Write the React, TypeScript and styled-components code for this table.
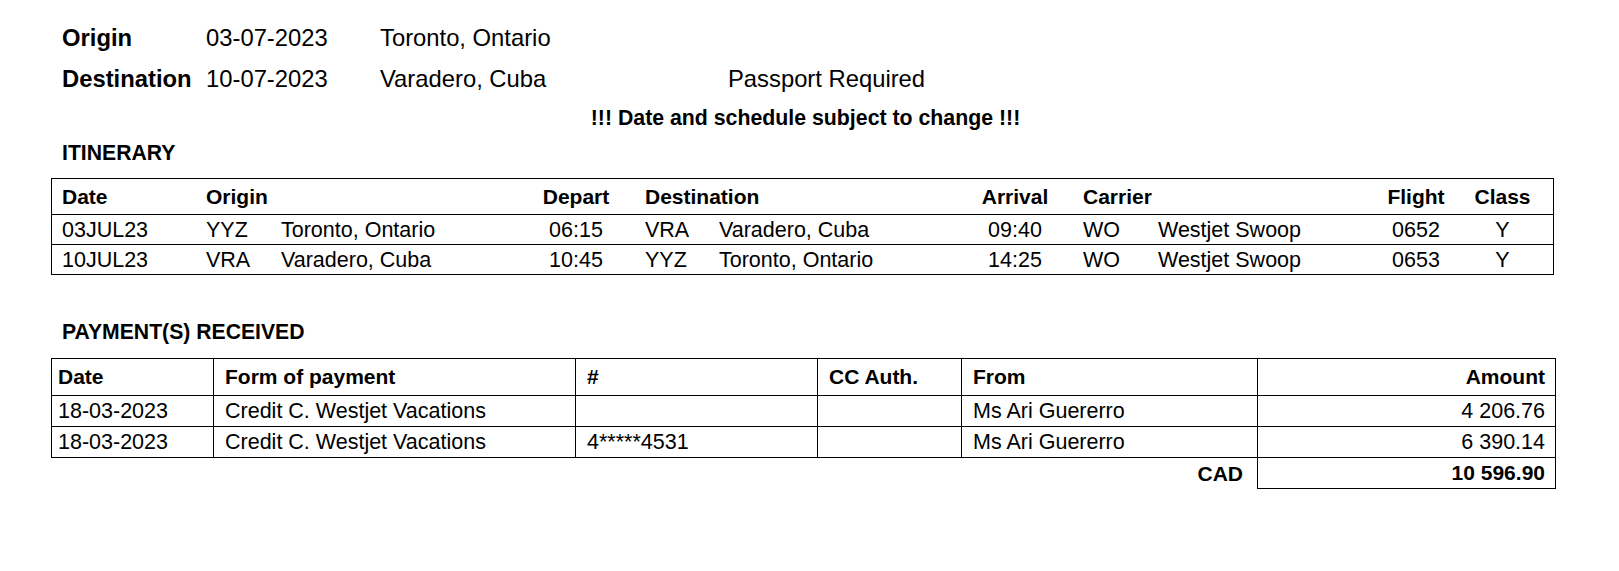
import React from 'react';
import styled, { createGlobalStyle } from 'styled-components';

const GlobalStyle = createGlobalStyle`
  html, body {
    margin: 0;
    padding: 0;
    background: #ffffff;
  }
  body {
    font-family: "Liberation Sans", Arial, sans-serif;
    color: #000000;
  }
`;

const Page = styled.div`
  width: 1619px;
  box-sizing: border-box;
  padding: 17px 0 40px 51px;
`;

const SummaryRow = styled.div`
  display: grid;
  grid-template-columns: 144px 174px 348px auto;
  padding-left: 11px;
  font-size: 23.8px;
  line-height: 41px;
`;

const SummaryLabel = styled.span`
  font-weight: bold;
`;

const SummaryValue = styled.span``;

const Notice = styled.div`
  width: 1503px;
  box-sizing: border-box;
  margin-top: 4px;
  padding-left: 6px;
  text-align: center;
  font-size: 21.3px;
  font-weight: bold;
  line-height: 30px;
`;

const SectionTitle = styled.div<{ $gap: number }>`
  margin-top: ${p => p.$gap}px;
  padding-left: 11px;
  font-size: 21.2px;
  font-weight: bold;
  line-height: 30px;
`;

const ItinTable = styled.div`
  width: 1503px;
  box-sizing: border-box;
  margin-top: 10px;
  border: 1px solid #000;
`;

const ItinRow = styled.div<{ $head?: boolean }>`
  display: grid;
  grid-template-columns: 144px 75px 226px 138px 74px 228px 136px 75px 222px 72px 101px;
  align-items: center;
  padding-left: 10px;
  padding-top: ${p => (p.$head ? 0 : 1)}px;
  box-sizing: border-box;
  height: ${p => (p.$head ? 35 : 30)}px;
  font-size: ${p => (p.$head ? 21 : 21.5)}px;
  font-weight: ${p => (p.$head ? 'bold' : 'normal')};
  & + & {
    border-top: 1px solid #000;
  }
`;

const ItinCell = styled.div<{ $center?: boolean; $span?: number }>`
  grid-column: span ${p => p.$span ?? 1};
  text-align: ${p => (p.$center ? 'center' : 'left')};
  white-space: nowrap;
`;

const PayTable = styled.div`
  display: grid;
  grid-template-columns: 163px 362px 242px 144px 296px 298px;
  margin-top: 11px;
  width: 1505px;
`;

const PayCell = styled.div<{
  $head?: boolean;
  $first?: boolean;
  $right?: boolean;
  $bold?: boolean;
}>`
  box-sizing: border-box;
  display: flex;
  align-items: center;
  justify-content: ${p => (p.$right ? 'flex-end' : 'flex-start')};
  height: ${p => (p.$head ? 38 : 31)}px;
  padding: ${p => (p.$right ? '0 10px 0 0' : p.$first ? '0 0 0 6px' : '0 0 0 11px')};
  border-right: 1px solid #000;
  border-bottom: 1px solid #000;
  border-top: ${p => (p.$head ? '1px solid #000' : 'none')};
  border-left: ${p => (p.$first ? '1px solid #000' : 'none')};
  font-size: ${p => (p.$head || p.$bold ? 21 : 21.5)}px;
  font-weight: ${p => (p.$head || p.$bold ? 'bold' : 'normal')};
  white-space: nowrap;
`;

const TotalLabel = styled.div`
  grid-column: span 5;
  box-sizing: border-box;
  height: 31px;
  display: flex;
  align-items: center;
  justify-content: flex-end;
  padding-right: 14px;
  border-right: 1px solid #000;
  font-size: 21px;
  font-weight: bold;
`;

const itinerary = [
  {
    date: '03JUL23',
    fromCode: 'YYZ',
    fromCity: 'Toronto, Ontario',
    depart: '06:15',
    toCode: 'VRA',
    toCity: 'Varadero, Cuba',
    arrival: '09:40',
    carrierCode: 'WO',
    carrier: 'Westjet Swoop',
    flight: '0652',
    cls: 'Y',
  },
  {
    date: '10JUL23',
    fromCode: 'VRA',
    fromCity: 'Varadero, Cuba',
    depart: '10:45',
    toCode: 'YYZ',
    toCity: 'Toronto, Ontario',
    arrival: '14:25',
    carrierCode: 'WO',
    carrier: 'Westjet Swoop',
    flight: '0653',
    cls: 'Y',
  },
];

const payments = [
  {
    date: '18-03-2023',
    form: 'Credit C. Westjet Vacations',
    number: '',
    auth: '',
    from: 'Ms Ari Guererro',
    amount: '4 206.76',
  },
  {
    date: '18-03-2023',
    form: 'Credit C. Westjet Vacations',
    number: '4*****4531',
    auth: '',
    from: 'Ms Ari Guererro',
    amount: '6 390.14',
  },
];

const App: React.FC = () => {
  return (
    <>
      <GlobalStyle />
      <Page>
        <SummaryRow>
          <SummaryLabel>Origin</SummaryLabel>
          <SummaryValue>03-07-2023</SummaryValue>
          <SummaryValue>Toronto, Ontario</SummaryValue>
          <SummaryValue />
        </SummaryRow>
        <SummaryRow>
          <SummaryLabel>Destination</SummaryLabel>
          <SummaryValue>10-07-2023</SummaryValue>
          <SummaryValue>Varadero, Cuba</SummaryValue>
          <SummaryValue>Passport Required</SummaryValue>
        </SummaryRow>

        <Notice>!!! Date and schedule subject to change !!!</Notice>

        <SectionTitle $gap={5}>ITINERARY</SectionTitle>
        <ItinTable>
          <ItinRow $head>
            <ItinCell>Date</ItinCell>
            <ItinCell $span={2}>Origin</ItinCell>
            <ItinCell $center>Depart</ItinCell>
            <ItinCell $span={2}>Destination</ItinCell>
            <ItinCell $center>Arrival</ItinCell>
            <ItinCell $span={2}>Carrier</ItinCell>
            <ItinCell $center>Flight</ItinCell>
            <ItinCell $center>Class</ItinCell>
          </ItinRow>
          {itinerary.map(leg => (
            <ItinRow key={leg.date}>
              <ItinCell>{leg.date}</ItinCell>
              <ItinCell>{leg.fromCode}</ItinCell>
              <ItinCell>{leg.fromCity}</ItinCell>
              <ItinCell $center>{leg.depart}</ItinCell>
              <ItinCell>{leg.toCode}</ItinCell>
              <ItinCell>{leg.toCity}</ItinCell>
              <ItinCell $center>{leg.arrival}</ItinCell>
              <ItinCell>{leg.carrierCode}</ItinCell>
              <ItinCell>{leg.carrier}</ItinCell>
              <ItinCell $center>{leg.flight}</ItinCell>
              <ItinCell $center>{leg.cls}</ItinCell>
            </ItinRow>
          ))}
        </ItinTable>

        <SectionTitle $gap={42}>PAYMENT(S) RECEIVED</SectionTitle>
        <PayTable>
          <PayCell $head $first>Date</PayCell>
          <PayCell $head>Form of payment</PayCell>
          <PayCell $head>#</PayCell>
          <PayCell $head>CC Auth.</PayCell>
          <PayCell $head>From</PayCell>
          <PayCell $head $right>Amount</PayCell>
          {payments.map((p, i) => (
            <React.Fragment key={i}>
              <PayCell $first>{p.date}</PayCell>
              <PayCell>{p.form}</PayCell>
              <PayCell>{p.number}</PayCell>
              <PayCell>{p.auth}</PayCell>
              <PayCell>{p.from}</PayCell>
              <PayCell $right>{p.amount}</PayCell>
            </React.Fragment>
          ))}
          <TotalLabel>CAD</TotalLabel>
          <PayCell $right $bold>10 596.90</PayCell>
        </PayTable>
      </Page>
    </>
  );
};

export default App;
